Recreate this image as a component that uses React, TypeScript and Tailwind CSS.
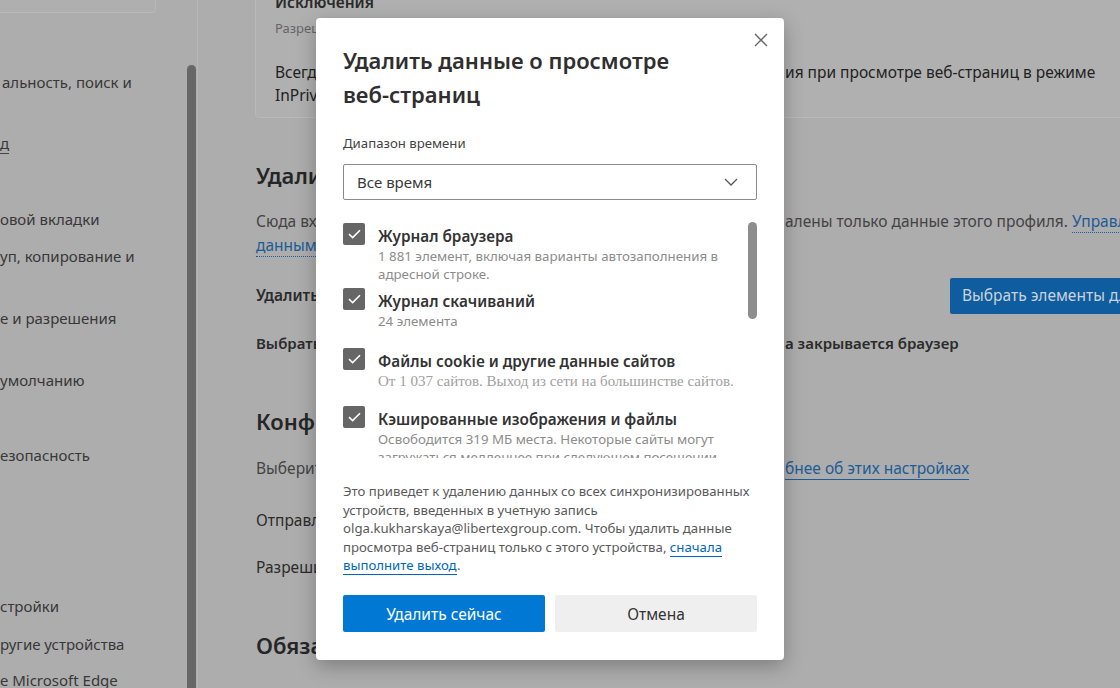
import React from "react";

// Настройки Edge под затемнением + диалог «Удалить данные о просмотре».

function Check() {
  return (
    <div className="flex h-[22px] w-[22px] shrink-0 items-center justify-center rounded-[2px] bg-[#666666]">
      <svg width="13" height="10" viewBox="0 0 13 10" fill="none">
        <path d="M1 5.2 4.6 8.6 12 1.2" stroke="#fff" strokeWidth="1.6" />
      </svg>
    </div>
  );
}

interface ItemProps {
  title: string;
  desc: string;
  className?: string;
  descClass?: string;
}

function Item({ title, desc, className = "", descClass = "text-[13.3px]" }: ItemProps) {
  return (
    <div className={`flex gap-[13px] ${className}`}>
      <Check />
      <div className="pt-[3px] pr-[10px]">
        <p className="text-[15.3px] leading-[20px] font-semibold text-[#333]">{title}</p>
        <p className={`mt-[1px] leading-[18px] text-[#8c8c8c] ${descClass}`}>{desc}</p>
      </div>
    </div>
  );
}

function Split({ left, w, children, className = "" }: { left: string; w: string; children: React.ReactNode; className?: string }) {
  return (
    <p className={`flex whitespace-nowrap ${className}`}>
      <span className={`${w} shrink-0 overflow-hidden`}>{left}</span>
      <span>{children}</span>
    </p>
  );
}

export default function App() {
  return (
    <div className="relative flex h-[688px] w-[1120px] overflow-hidden bg-[#adadad] font-['Noto_Sans',sans-serif]">
      {/* боковое меню */}
      <aside className="flex w-[198px] shrink-0 border-r border-[#b6b6b6]">
        <div className="flex-1 whitespace-nowrap text-[15px] leading-[20px] text-[#383838]">
          <div className="h-[13px] w-[156px] rounded-br-[4px] border-b border-r border-[#b9b9b9] bg-[#afafaf]" />
          <p className="mt-[59px] pl-[2px]">альность, поиск и</p>
          <p className="mt-[41px]">
            <span className="border-b border-[#444]">д</span>
          </p>
          <p className="mt-[56px]">овой вкладки</p>
          <p className="mt-[17px]">уп, копирование и</p>
          <p className="mt-[42px]">е и разрешения</p>
          <p className="mt-[42px]">умолчанию</p>
          <p className="mt-[55px]">езопасность</p>
          <p className="mt-[131px]">стройки</p>
          <p className="mt-[18px]">ругие устройства</p>
          <p className="mt-[16px]">е Microsoft Edge</p>
        </div>
        <div className="mr-[1px] w-[9px] pt-[65px]">
          <div className="h-full rounded-t-full bg-[#676767]" />
        </div>
      </aside>

      {/* основная область */}
      <main className="min-w-0 flex-1 pl-[57px] text-[15.5px] text-[#2b2b2b]">
        <div className="-mt-[9px] w-[900px] rounded-[4px] border border-[#b9b9b9] bg-[#b0b0b0] pb-[10px] pl-[19px]">
          <p className="leading-[20px] font-semibold">Исключения</p>
          <p className="mt-[7px] text-[13px] leading-[18px] text-[#666]">Разрешить отслеживание на указанных сайтах</p>
          <div className="mt-[24px] leading-[23px] text-[#222]">
            <Split left="Всегда использовать строгую блокировку отслеживан" w="w-[510px]">
              ия при просмотре веб-страниц в режиме
            </Split>
            <p>InPrivate</p>
          </div>
        </div>

        <div className="pl-[1px]">
          <h2 className="mt-[43px] text-[22px] leading-[28px] font-semibold text-[#262626]">
            Удалить данные о просмотре веб-страниц
          </h2>
          <div className="mt-[20px] leading-[24px] text-[#444]">
            <Split left="Сюда входят журнал, пароли, файлы cookie и многое другое. Будут уд" w="w-[529px]">
              алены только данные этого профиля.{" "}
              <span className="border-b border-dotted border-[#1d5c96] text-[#1d5c96]">Управление</span>
            </Split>
            <p>
              <span className="border-b border-dotted border-[#1d5c96] text-[#1d5c96]">данными</span>
            </p>
          </div>
          <div className="mt-[21px] flex h-[36px] items-center whitespace-nowrap">
            <span className="w-[694px] shrink-0 overflow-hidden font-semibold">
              Удалить данные о просмотре веб-страниц сейчас
            </span>
            <button className="h-[36px] rounded-[2px] bg-[#0f5c9e] px-[12px] text-[#c9d3dd]">
              Выбрать элементы для удаления
            </button>
          </div>
          <Split
            left="Выбрать, что нужно удалять каждый раз, когд"
            w="w-[529px]"
            className="mt-[17px] text-[15px] leading-[24px] font-semibold"
          >
            а закрывается браузер
          </Split>

          <h2 className="mt-[52px] text-[22px] leading-[28px] font-semibold text-[#262626]">Конфиденциальность</h2>
          <Split
            left="Выберите параметры конфиденциальности в Microsoft Edge. Подро"
            w="w-[529px]"
            className="mt-[21px] leading-[24px] text-[#444]"
          >
            <span className="border-b border-[#1d5c96] text-[#1d5c96]">бнее об этих настройках</span>
          </Split>
          <p className="mt-[28px] leading-[24px]">Отправлять запросы «Не отслеживать»</p>
          <p className="mt-[23px] leading-[24px]">Разрешить сайтам проверять, сохранены ли способы оплаты</p>
          <h2 className="mt-[52px] text-[22px] leading-[28px] font-semibold text-[#262626]">Обязательные данные</h2>
        </div>
      </main>

      {/* диалог */}
      <div className="absolute left-[316px] top-[18px] flex h-[642px] w-[468px] flex-col rounded-[4px] bg-white px-[27px] pt-[25px] shadow-[0_6px_20px_rgba(0,0,0,0.28)]">
        <button className="absolute right-[16px] top-[15px] flex h-[14px] w-[14px] items-center justify-center">
          <svg width="14" height="14" viewBox="0 0 14 14" fill="none">
            <path d="M1 1l12 12M13 1 1 13" stroke="#666" strokeWidth="1.4" />
          </svg>
        </button>
        <h1 className="text-[22px] leading-[34px] font-semibold text-[#2f2f2f]">
          Удалить данные о просмотре <span className="whitespace-nowrap">веб-страниц</span>
        </h1>
        <p className="mt-[23px] text-[13.2px] leading-[18px] text-[#444]">Диапазон времени</p>
        <div className="mt-[12px] flex h-[36px] items-center justify-between rounded-[2px] border border-[#8a8a8a] pl-[13px] pr-[18px] text-[15px] text-[#3a3a3a]">
          <span>Все время</span>
          <svg width="14" height="8" viewBox="0 0 14 8" fill="none">
            <path d="M1 1l6 6 6-6" stroke="#555" strokeWidth="1.3" />
          </svg>
        </div>

        <div className="mt-[18px] flex h-[240px] shrink-0 overflow-hidden pt-[5px]">
          <div className="flex-1">
            <Item title="Журнал браузера" desc="1 881 элемент, включая варианты автозаполнения в адресной строке." />
            <Item className="mt-[5px]" title="Журнал скачиваний" desc="24 элемента" />
            <Item
              className="mt-[18px]"
              title="Файлы cookie и другие данные сайтов"
              desc="От 1 037 сайтов. Выход из сети на большинстве сайтов."
              descClass="whitespace-nowrap font-['Liberation_Serif',serif] text-[15px] text-[#a0a0a0]"
            />
            <Item
              className="mt-[16px]"
              title="Кэшированные изображения и файлы"
              desc="Освободится 319 МБ места. Некоторые сайты могут загружаться медленнее при следующем посещении."
            />
          </div>
          <div className="-mt-[1px] h-[97px] w-[9px] shrink-0 rounded-full bg-[#8d8d8d]" />
        </div>

        <p className="mt-[24px] text-[13.2px] leading-[18.5px] text-[#5a5a5a]">
          Это приведет к удалению данных со всех синхронизированных устройств, введенных в учетную запись
          olga.kukharskaya@libertexgroup.com. Чтобы удалить данные просмотра веб-страниц только с этого устройства,{" "}
          <span className="border-b border-[#0067b8] text-[#0067b8]">сначала выполните выход</span>.
        </p>

        <div className="mt-[20px] flex gap-[10px] text-[15.5px]">
          <button className="h-[37px] flex-1 rounded-[2px] bg-[#0078d4] pt-[3px] text-white">Удалить сейчас</button>
          <button className="h-[37px] flex-1 rounded-[2px] bg-[#efefef] pt-[3px] text-[#333]">Отмена</button>
        </div>
      </div>
    </div>
  );
}
